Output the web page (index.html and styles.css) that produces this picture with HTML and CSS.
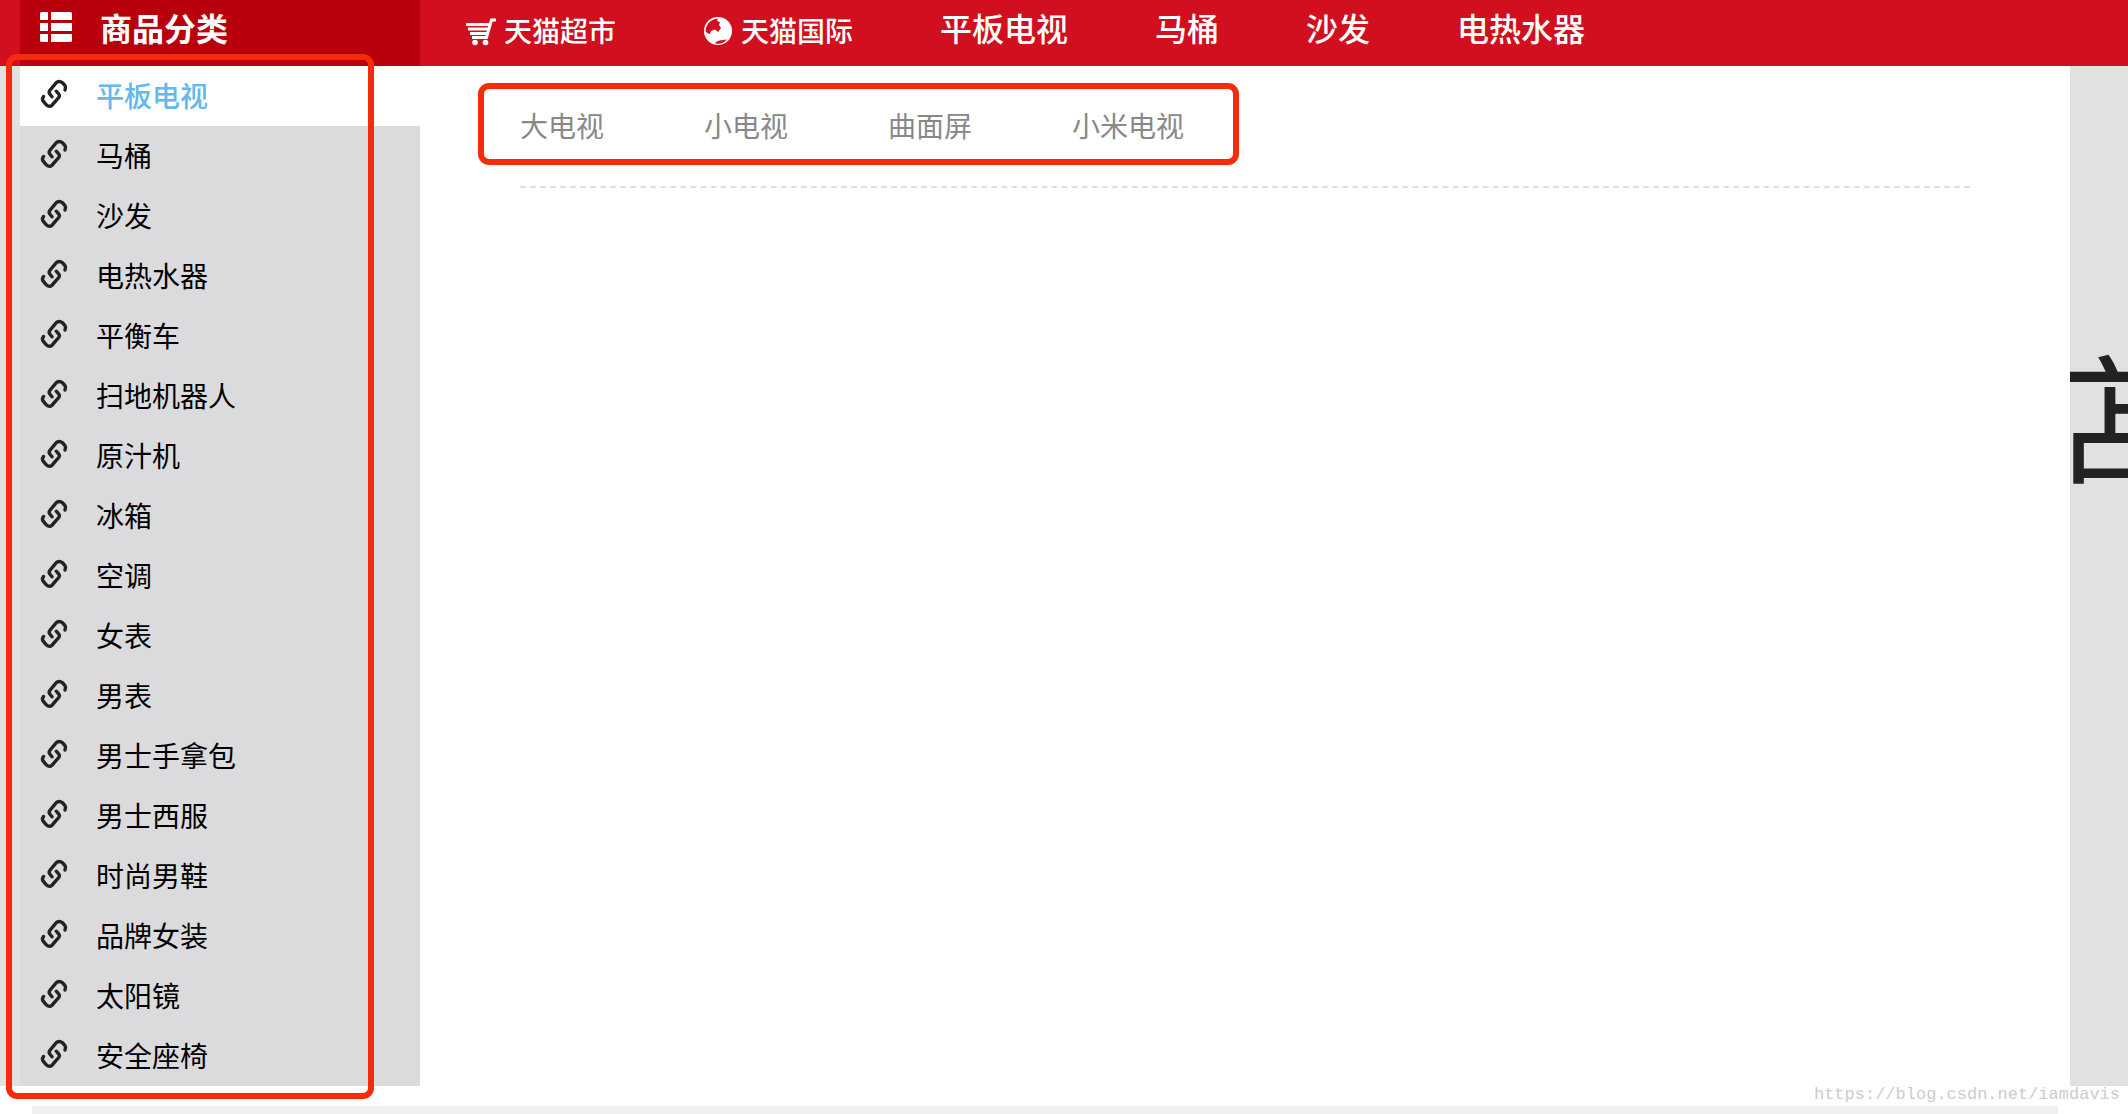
FILE: index.html
```
<!DOCTYPE html>
<html lang="zh-CN">
<head>
    <meta charset="UTF-8">
    <meta name="viewport" content="width=device-width, initial-scale=1.0">
    <title>商品分类</title>
    <link rel="stylesheet" href="styles.css">
</head>
<body>
    <svg class="sprite" aria-hidden="true">
        <symbol id="icon-link" viewBox="0 0 28 30">
            <path d="M25 11 L25.500 8.500 Q25.500 7 24.500 6 L22.500 3.800 Q21 2.500 19 2.500 Q17.500 2.500 16.500 3.500 L9.800 11.500 Q8.500 13.300 9.800 15 L12 17.800" />
            <path d="M3.500 17.500 L2.500 19.500 Q2.300 21 3.200 22.200 L6.500 26 Q9.500 28.500 12 26.200 L18.700 18.500 Q20 16.700 18.700 15 L16.300 12.200" />
        </symbol>
    </svg>

    <nav class="top-nav">
        <h2 class="nav-title">
            <svg class="list-icon" viewBox="0 0 32 30" aria-hidden="true">
                <path d="M0 1.500 Q0 0 1.500 0 H8 V8 H0 Z M11 0 H30.500 Q32 0 32 1.500 V8 H11 Z M0 11 H8 V19 H0 Z M11 11 H32 V19 H11 Z M0 22 H8 V30 H1.500 Q0 30 0 28.500 Z M11 22 H32 V28.500 Q32 30 30.500 30 H11 Z" />
            </svg>
            商品分类
        </h2>
        <div class="nav-links">
            <a href="#" class="nav-logo">
                <svg viewBox="0 0 30 30" aria-hidden="true">
                    <path class="line" d="M0 8.500 H24 M2 13 H22 M4 17.500 H21 M6 21.500 H20.500 L25.500 4 H30" />
                    <circle cx="9" cy="26.500" r="2.800" />
                    <circle cx="19.500" cy="26.500" r="2.800" />
                </svg>
                天猫超市
            </a>
            <a href="#" class="nav-logo">
                <svg viewBox="0 0 30 30" aria-hidden="true">
                    <circle cx="15" cy="15" r="14" />
                    <path class="sea" d="M2.500 15 C3 8 8 3 15 2.500 L14 5 L17 6 L16 9 L18 12 L15 16 L12 13.500 L8 15 L7 18 L4 17 Z" />
                    <path class="sea" d="M12 27.500 C14 24 18 24.500 24 23.500 C21 27 17 28.500 12 27.500 Z" />
                </svg>
                天猫国际
            </a>
            <a href="#">平板电视</a>
            <a href="#">马桶</a>
            <a href="#">沙发</a>
            <a href="#">电热水器</a>
        </div>
    </nav>

    <main class="banner">
        <span class="banner-text">店</span>
        <div class="category">
            <ul class="category-list">
                <li class="active"><a href="#"><svg><use href="#icon-link" /></svg>平板电视</a></li>
                <li><a href="#"><svg><use href="#icon-link" /></svg>马桶</a></li>
                <li><a href="#"><svg><use href="#icon-link" /></svg>沙发</a></li>
                <li><a href="#"><svg><use href="#icon-link" /></svg>电热水器</a></li>
                <li><a href="#"><svg><use href="#icon-link" /></svg>平衡车</a></li>
                <li><a href="#"><svg><use href="#icon-link" /></svg>扫地机器人</a></li>
                <li><a href="#"><svg><use href="#icon-link" /></svg>原汁机</a></li>
                <li><a href="#"><svg><use href="#icon-link" /></svg>冰箱</a></li>
                <li><a href="#"><svg><use href="#icon-link" /></svg>空调</a></li>
                <li><a href="#"><svg><use href="#icon-link" /></svg>女表</a></li>
                <li><a href="#"><svg><use href="#icon-link" /></svg>男表</a></li>
                <li><a href="#"><svg><use href="#icon-link" /></svg>男士手拿包</a></li>
                <li><a href="#"><svg><use href="#icon-link" /></svg>男士西服</a></li>
                <li><a href="#"><svg><use href="#icon-link" /></svg>时尚男鞋</a></li>
                <li><a href="#"><svg><use href="#icon-link" /></svg>品牌女装</a></li>
                <li><a href="#"><svg><use href="#icon-link" /></svg>太阳镜</a></li>
                <li><a href="#"><svg><use href="#icon-link" /></svg>安全座椅</a></li>
            </ul>
            <div class="category-detail">
                <div class="detail-row">
                    <a href="#">大电视</a>
                    <a href="#">小电视</a>
                    <a href="#">曲面屏</a>
                    <a href="#">小米电视</a>
                </div>
            </div>
        </div>
    </main>

    <footer class="bottom-bar"></footer>

    <div class="mark mark-list"></div>
    <div class="mark mark-detail"></div>
    <span class="watermark">https://blog.csdn.net/iamdavis</span>
</body>
</html>
```
FILE: styles.css
```
* {
    box-sizing: border-box;
}

body {
    position: relative;
    margin: 0;
    background: #fff;
    color: #000;
    font-family: "Noto Sans CJK SC", sans-serif;
    font-size: 28px;
}

a {
    color: inherit;
    text-decoration: none;
}

.sprite {
    position: absolute;
    width: 0;
    height: 0;
}

/* top navigation */
.top-nav {
    display: flex;
    height: 66px;
    padding-left: 20px;
    background: #d10f1e;
    color: #fff;
    font-size: 32px;
    line-height: 54px;
}

.nav-title {
    display: flex;
    gap: 28px;
    width: 400px;
    margin: 0;
    padding-left: 20px;
    background: #b7000b;
    font-size: 32px;
    font-weight: 700;
}

.list-icon {
    width: 32px;
    height: 30px;
    margin-top: 12px;
    fill: #fff;
}

.nav-links {
    display: flex;
    gap: 87px;
    padding-left: 46px;
    font-weight: 500;
}

.nav-logo {
    display: flex;
    gap: 8px;
    font-size: 28px;
    line-height: 60px;
}

.nav-logo svg {
    width: 30px;
    height: 30px;
    margin-top: 16px;
    fill: #fff;
}

.nav-logo .line {
    fill: none;
    stroke: #fff;
    stroke-width: 3;
}

.nav-logo .sea {
    fill: #d10f1e;
}

/* banner with the category menu over it */
.banner {
    position: relative;
    overflow: hidden;
    padding: 0 58px 0 20px;
    background: #e1e1e1;
}

.banner-text {
    position: absolute;
    top: 256px;
    right: -46px;
    color: #222;
    font-size: 142px;
    line-height: 180px;
}

.category {
    position: relative;
    display: flex;
    background: #fff;
}

.category-list {
    width: 400px;
    margin: 0;
    padding: 0;
    background: #dbdbdd;
    list-style: none;
}

.category-list a {
    display: flex;
    gap: 28px;
    height: 60px;
    padding-left: 20px;
    line-height: 58px;
}

.category-list svg {
    width: 28px;
    height: 30px;
    margin-top: 13px;
    fill: none;
    stroke: #222;
    stroke-width: 3.4;
    stroke-linecap: round;
}

.category-list .active {
    background: #fff;
    color: #62b9ee;
    font-weight: 500;
}

.category-detail {
    flex: 1;
    padding: 0 100px;
}

.detail-row {
    display: flex;
    gap: 100px;
    height: 122px;
    border-bottom: 2px dashed #dfdfdf;
    color: #888;
    line-height: 118px;
}

.bottom-bar {
    height: 8px;
    margin: 20px 70px 0 32px;
    background: #f0f0f0;
}

/* red frames */
.mark {
    position: absolute;
    border: 6px solid #f42c0c;
    border-radius: 11px;
    pointer-events: none;
}

.mark-list {
    top: 54px;
    left: 6px;
    width: 368px;
    height: 1045px;
}

.mark-detail {
    top: 83px;
    left: 478px;
    width: 761px;
    height: 82px;
}

.watermark {
    position: absolute;
    right: 8px;
    bottom: 7px;
    color: #ccc;
    font-family: "Liberation Mono", monospace;
    font-size: 17px;
    line-height: 24px;
}
```
